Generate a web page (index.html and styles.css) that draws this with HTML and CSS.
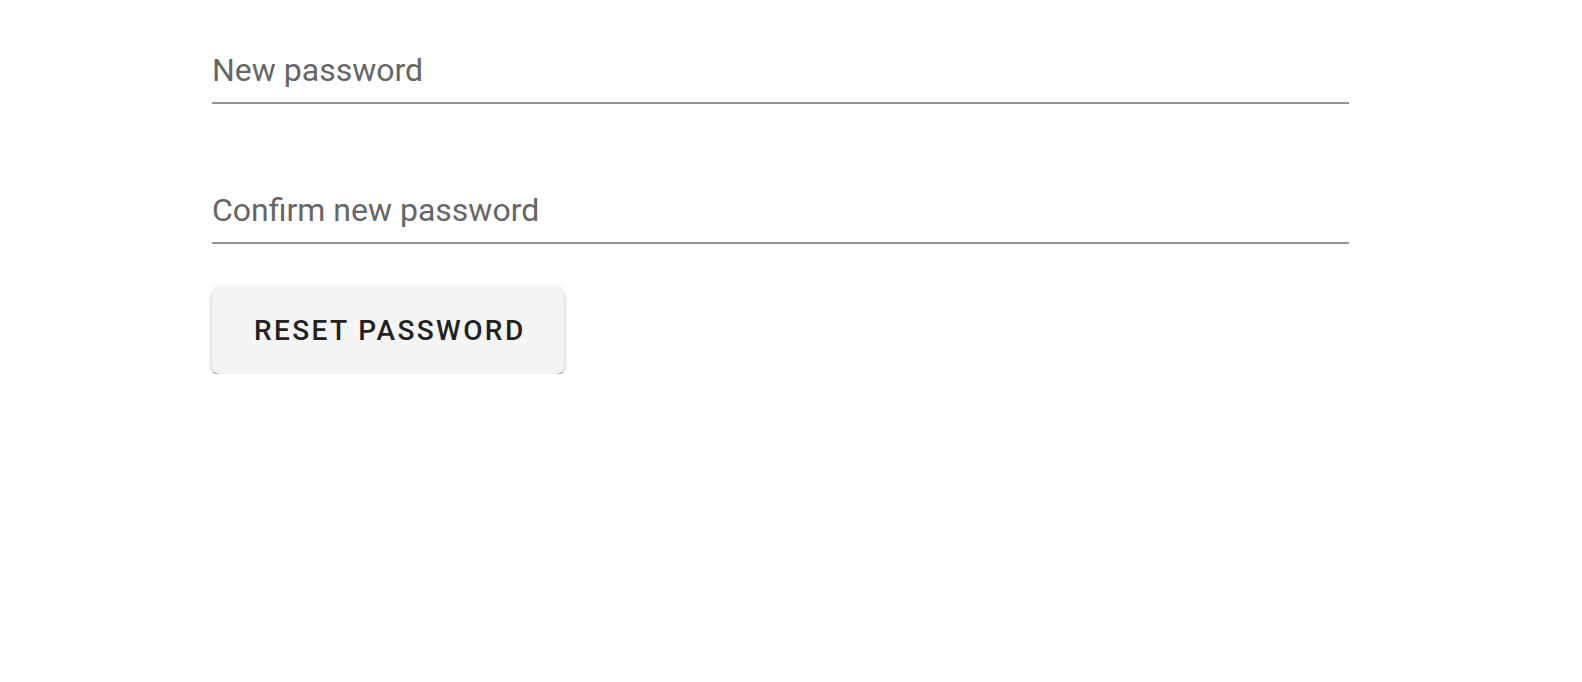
FILE: index.html
```html
<!DOCTYPE html>
<html lang="en">
<head>
<meta charset="utf-8">
<title>Reset password</title>
<link rel="stylesheet" href="styles.css">
</head>
<body>
<form class="form">
  <div class="field"><span class="label">New password</span></div>
  <div class="field field-second"><span class="label">Confirm new password</span></div>
  <button type="button" class="btn">RESET PASSWORD</button>
</form>
</body>
</html>
```
FILE: styles.css
```css
html, body {
  margin: 0;
  padding: 0;
  background: #ffffff;
}
.form {
  display: flex;
  flex-direction: column;
  align-items: flex-start;
  padding: 51px 0 0 212px;
  width: 1137px;
  font-family: Roboto, "Liberation Sans", sans-serif;
}
.field {
  align-self: stretch;
  border-bottom: 2px solid #949494;
}
.field-second {
  margin-top: 87px;
}
.label {
  display: block;
  font-size: 32px;
  line-height: 38px;
  padding-bottom: 13px;
  color: #666666;
}
.btn {
  margin-top: 43px;
  height: 87px;
  padding: 0 38px 0 42px;
  display: inline-flex;
  align-items: center;
  border: none;
  border-radius: 8px;
  background: #f5f5f5;
  color: #222222;
  font-family: Roboto, "Liberation Sans", sans-serif;
  font-weight: 500;
  font-size: 28px;
  letter-spacing: 2.4px;
  box-shadow: 0 4px 2px -2px rgba(0,0,0,0.32), 0 2px 3px 0 rgba(0,0,0,0.18), 0 1px 7px 0 rgba(0,0,0,0.12);
}
```
